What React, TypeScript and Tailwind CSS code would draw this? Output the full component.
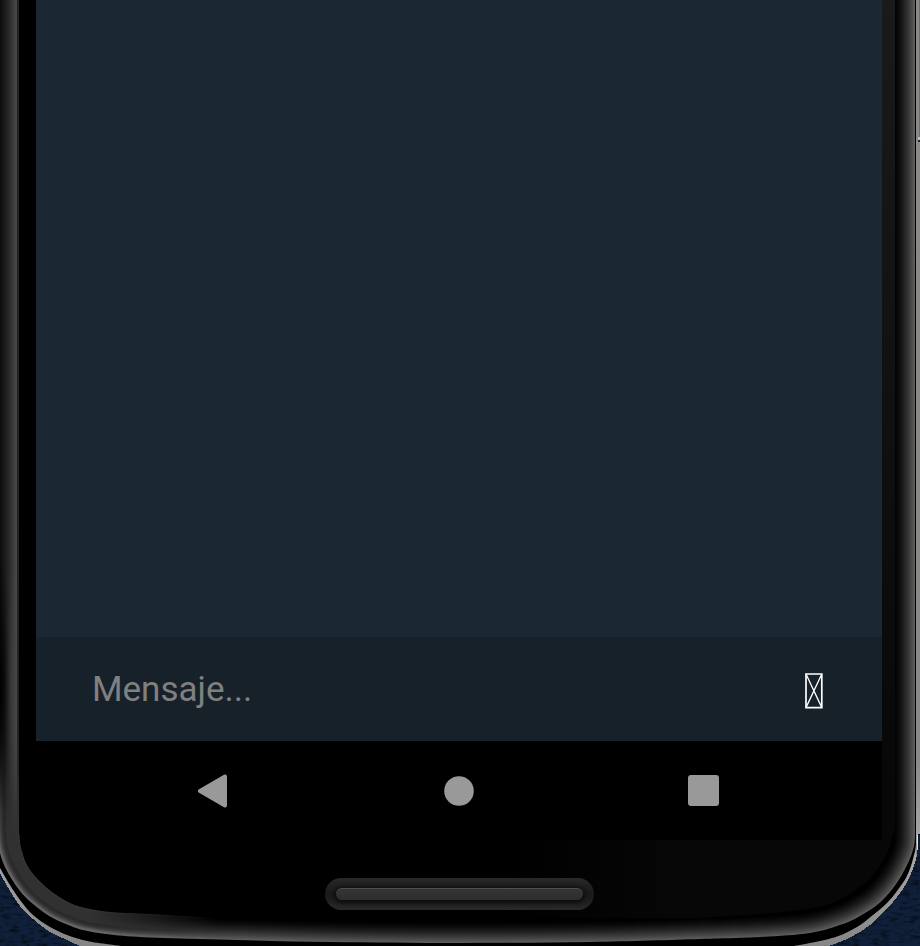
type Point = [number, number];

// Joins the points with a smooth Catmull-Rom curve.
function smooth(points: Point[]): string {
  let d = `M${points[0][0]} ${points[0][1]}`;
  for (let i = 0; i < points.length - 1; i++) {
    const a = points[Math.max(i - 1, 0)];
    const b = points[i];
    const c = points[i + 1];
    const e = points[Math.min(i + 2, points.length - 1)];
    d += ` C${b[0] + (c[0] - a[0]) / 6} ${b[1] + (c[1] - a[1]) / 6} ${c[0] - (e[0] - b[0]) / 6} ${c[1] - (e[1] - b[1]) / 6} ${c[0]} ${c[1]}`;
  }
  return d;
}

const OUTER =
  smooth([
    [-3, -5], [-3, 400], [-3, 780], [-3, 834], [0, 853], [7, 871], [20, 891], [33, 904], [50, 916.5], [67, 924.5], [83, 930], [110, 934.5],
    [150, 937.5], [220, 939.5], [330, 942], [460, 943], [590, 942], [700, 939], [760, 937], [810, 933], [843, 924], [860, 916], [877, 905],
    [890, 892], [900, 878], [907, 865], [913, 850], [915, 834], [915, 780], [915, 400], [915, -5],
  ]);
const INNER =
  smooth([
    [18.5, -5], [18.5, 400], [18.5, 790], [19, 836], [22, 853], [27, 866], [37, 879], [50, 891], [67, 902], [83, 908], [110, 912.5],
    [150, 914.5], [230, 919], [460, 930],
  ]) + ' V-5 Z';
const SILHOUETTE =
  smooth([[-3, 866], [0, 873], [10, 891], [20, 906], [33, 919], [50, 932], [67, 940], [78, 945], [92, 950]]) +
  ' H818 L' +
  smooth([
    [818, 950], [837, 943], [853, 936], [870, 925], [883, 913], [893, 902], [903, 889], [910, 876], [915, 863], [917, 853], [918, 834],
  ]).slice(1) +
  ' H925 V-5 H-3 Z';
const BAND =
  smooth([[-3, 862], [0, 868], [10, 885], [20, 900], [33, 915], [50, 927], [67, 935], [87, 941], [110, 944.5], [150, 950]]) +
  ' H770 L' +
  smooth([
    [770, 950], [810, 943], [837, 936.5], [857, 927], [873, 915], [887, 903], [897, 891], [907, 876], [913, 859], [916, 844], [916, 820], [916, -5],
  ]).slice(1) +
  ' H-3 Z';

const STEPS = Array.from({ length: 22 }, (_, i) => {
  const t = i / 21;
  return { width: 44 - i * 2, shade: Math.round(92 * Math.pow(t, 1.5)) };
});
const LEFT_STEPS = Array.from({ length: 8 }, (_, i) => ({ width: 18 - i * 2, shade: 42 + Math.round(i * i * 1.2) }));

function PhoneBody() {
  return (
    <svg className="absolute inset-0" width="920" height="946" viewBox="0 0 920 946" fill="none">
      <defs>
        <linearGradient id="silver" x1="0" x2="0" y1="0" y2="946" gradientUnits="userSpaceOnUse">
          <stop offset="0" stopColor="#8b8987" />
          <stop offset=".8" stopColor="#888" />
          <stop offset=".9" stopColor="#aaa" />
          <stop offset="1" stopColor="#858585" />
        </linearGradient>
        <linearGradient id="leftRim" x1="0" x2="18" y1="0" y2="0" gradientUnits="userSpaceOnUse">
          <stop offset="0" stopColor="#0b0b0b" />
          <stop offset=".55" stopColor="#2c2c2c" />
          <stop offset=".93" stopColor="#4a4a4a" />
          <stop offset=".95" stopColor="#282828" />
          <stop offset="1" stopColor="#161616" />
        </linearGradient>
        <linearGradient id="leftDark" x1="0" x2="18" y1="0" y2="0" gradientUnits="userSpaceOnUse">
          <stop offset="0" stopColor="#000" />
          <stop offset=".25" stopColor="#0a0a0a" />
          <stop offset=".6" stopColor="#383838" />
          <stop offset=".93" stopColor="#474747" />
          <stop offset="1" stopColor="#161616" />
        </linearGradient>
        <linearGradient id="fadeMid" x1="0" x2="0" y1="560" y2="810" gradientUnits="userSpaceOnUse">
          <stop offset="0" stopColor="#fff" stopOpacity="0" />
          <stop offset=".5" stopColor="#fff" />
          <stop offset="1" stopColor="#fff" stopOpacity="0" />
        </linearGradient>
        <linearGradient id="fadeTop" x1="0" x2="0" y1="720" y2="840" gradientUnits="userSpaceOnUse">
          <stop offset="0" stopColor="#fff" />
          <stop offset="1" stopColor="#fff" stopOpacity="0" />
        </linearGradient>
        <linearGradient id="fadeAcross" x1="60" x2="220" y1="0" y2="0" gradientUnits="userSpaceOnUse">
          <stop offset="0" stopColor="#fff" />
          <stop offset=".2" stopColor="#fff" />
          <stop offset="1" stopColor="#fff" stopOpacity="0" />
        </linearGradient>
        <linearGradient id="glassSide" x1="0" x2="0" y1="0" y2="800" gradientUnits="userSpaceOnUse">
          <stop offset="0" stopColor="#1a1a1a" />
          <stop offset="1" stopColor="#070707" />
        </linearGradient>
        <linearGradient id="glassBottom" x1="510" x2="680" y1="0" y2="0" gradientUnits="userSpaceOnUse">
          <stop offset="0" stopColor="#000" />
          <stop offset="1" stopColor="#070707" />
        </linearGradient>
        <mask id="midMask" maskUnits="userSpaceOnUse" x="0" y="0" width="920" height="946">
          <rect width="20" height="946" fill="url(#fadeMid)" />
        </mask>
        <mask id="topMask" maskUnits="userSpaceOnUse" x="0" y="0" width="920" height="946">
          <rect width="20" height="946" fill="url(#fadeTop)" />
        </mask>
        <mask id="cornerMask" maskUnits="userSpaceOnUse" x="0" y="0" width="920" height="946">
          <rect width="230" height="946" fill="url(#fadeAcross)" />
        </mask>
        <clipPath id="body">
          <path d={OUTER} />
        </clipPath>
        <filter id="grain" x="0" y="0" width="1" height="1" colorInterpolationFilters="sRGB">
          <feTurbulence type="fractalNoise" baseFrequency=".1 .3" numOctaves="3" seed="4" />
          <feColorMatrix values="0 0 0 0 0.02  0 0 0 0 0.04  0 0 0 0 0.08  2.4 0 0 0 -1.1" />
        </filter>
      </defs>
      <rect width="920" height="946" fill="#10203a" />
      <rect y="830" width="920" height="116" filter="url(#grain)" />
      <path d={SILHOUETTE} fill="url(#silver)" shapeRendering="crispEdges" />
      <path d="M919.5 0 V137" stroke="#6f6e6d" />
      <path d="M919 137 V140" stroke="#bbb" strokeWidth="2" />
      <path d="M918 141 H920" stroke="#222" strokeWidth="2" />
      <path d="M917.5 835 V850" stroke="#ddd" />
      <path d={BAND} fill="#000" />
      <g clipPath="url(#body)">
        <path d={OUTER} fill="#000" />
        <path d="M882 0 H895 V820 C893 860 866 892 826 905 C790 914 750 914 700 918 H510 V840 H882 Z" fill="url(#glassBottom)" />
        <rect x="882" width="13" height="830" fill="url(#glassSide)" />
        {STEPS.map((s) => (
          <path key={s.width} d={OUTER} strokeWidth={s.width} stroke={`rgb(${s.shade},${s.shade},${s.shade})`} style={{ mixBlendMode: 'lighten' }} />
        ))}
        <g mask="url(#cornerMask)">
          <path d={OUTER} fill="#313131" />
          {LEFT_STEPS.map((s) => (
            <path key={s.width} d={OUTER} strokeWidth={s.width} stroke={`rgb(${s.shade},${s.shade},${s.shade})`} />
          ))}
          <path d={INNER} fill="#000" stroke="#3b3b3b" strokeWidth="1" />
        </g>
      </g>
      <g mask="url(#topMask)">
        <rect width="18.5" height="852" fill="url(#leftRim)" />
      </g>
      <g mask="url(#midMask)">
        <rect width="18.5" height="830" fill="url(#leftDark)" />
      </g>
    </svg>
  );
}

function SpeakerBar() {
  return (
    <div className="flex h-[32px] w-[269px] items-center justify-center rounded-full bg-gradient-to-b from-[#292929] via-[#191919] to-[#292929]">
      <div className="h-[12px] w-[247px] rounded-full border-t border-[#505050] bg-gradient-to-b from-[#343434] to-[#2e2e2e] shadow-[0_1px_4px_2px_#0c0c0c]" />
    </div>
  );
}

export default function App() {
  return (
    <div className="relative h-[946px] w-[920px] overflow-hidden bg-black">
      <PhoneBody />
      <div className="relative flex h-full flex-col pl-[36px]">
        <main className="h-[637px] w-[846px] bg-[#1c2734]" />
        <div className="flex h-[104px] w-[846px] items-center justify-between bg-[#17212a] pr-[59px] pl-[56px]">
          <input
            className="mt-px w-[400px] bg-transparent font-[Roboto,sans-serif] text-[35px] leading-[42px] text-white outline-none placeholder:text-[#808080] placeholder:opacity-100"
            placeholder="Mensaje..."
          />
          <button aria-label="Enviar" className="mt-[3px]">
            <svg width="18" height="36" viewBox="0 0 18 36" fill="none" stroke="#fff">
              <path d="M1 1 H16.8 V34.6 H1 Z" strokeWidth="1.7" />
              <path d="M1 1 L16.8 34.6 M16.8 1 L1 34.6" strokeWidth="1.3" />
            </svg>
          </button>
        </div>
        <nav className="flex h-[99px] w-[846px] items-center justify-between bg-black pr-[163.5px] pl-[161px]">
          <svg width="31" height="34" viewBox="0 0 31 34" fill="#999" stroke="#999" strokeWidth="4" strokeLinejoin="round">
            <path d="M28 2.5 V31.5 L3 17 Z" />
          </svg>
          <svg className="ml-[2px]" width="30" height="30" viewBox="0 0 30 30" fill="#999">
            <circle cx="15" cy="15" r="14.8" />
          </svg>
          <div className="size-[31px] rounded-[3px] bg-[#999]" />
        </nav>
        <div className="flex w-[846px] justify-center pt-[38px]">
          <SpeakerBar />
        </div>
      </div>
    </div>
  );
}
